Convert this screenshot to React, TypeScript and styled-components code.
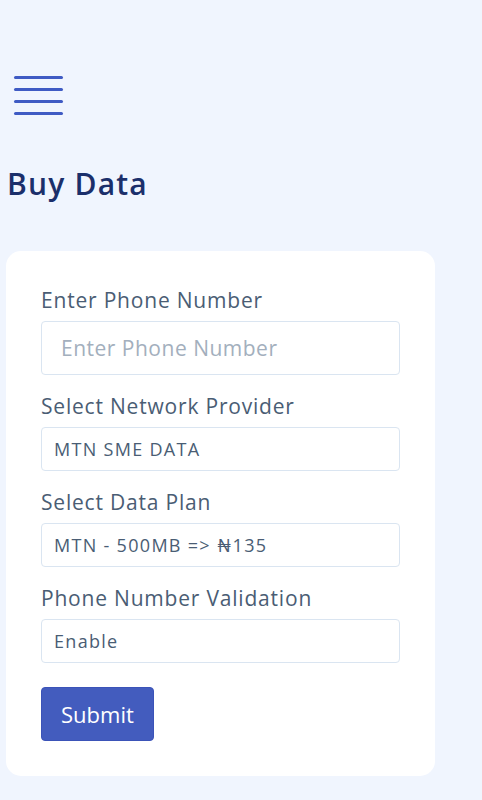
import React from "react";
import styled, { createGlobalStyle } from "styled-components";

const Global = createGlobalStyle`
  html, body {
    margin: 0;
    padding: 0;
    background: #f0f5fe;
  }
  body {
    font-family: "Open Sans", "Lato", sans-serif;
  }
  * { box-sizing: border-box; }
`;

const Page = styled.div`
  display: flow-root;
  min-height: 800px;
  padding: 0 47px 0 6px;
  background: #f0f5fe;
`;

const MenuButton = styled.button`
  display: flex;
  flex-direction: column;
  gap: 9px;
  width: 49px;
  margin: 76px 0 0 8px;
  padding: 0;
  border: none;
  background: transparent;
  cursor: pointer;
`;

const MenuLine = styled.span`
  display: block;
  width: 49px;
  height: 3px;
  border-radius: 2px;
  background: #3f5bc4;
`;

const Title = styled.h1`
  margin: 51px 0 0 1px;
  font-size: 30px;
  line-height: 36px;
  letter-spacing: 1.2px;
  font-weight: 600;
  color: #1b2f6b;
`;

const Card = styled.form`
  margin-top: 49px;
  background: #ffffff;
  border-radius: 15px;
  padding: 34px 35px 35px;
  display: flex;
  flex-direction: column;
  gap: 16px;
`;

const Field = styled.div`
  display: flex;
  flex-direction: column;
  gap: 6px;
`;

const Label = styled.label`
  font-size: 21px;
  line-height: 30px;
  letter-spacing: 0.8px;
  color: #4a5d74;
`;

const TextInput = styled.input`
  height: 54px;
  width: 100%;
  padding: 0 19px;
  border: 1px solid #dae5f1;
  border-radius: 4px;
  font-family: inherit;
  font-size: 21px;
  letter-spacing: 0.5px;
  color: #4a5d74;
  background: #fff;
  outline: none;
  &::placeholder {
    color: #a3afbd;
  }
`;

const Select = styled.select`
  appearance: none;
  -webkit-appearance: none;
  height: 44px;
  width: 100%;
  padding: 0 12px;
  border: 1px solid #dae5f1;
  border-radius: 4px;
  font-family: inherit;
  font-size: 18px;
  letter-spacing: 1.3px;
  color: #4a5d74;
  background: #fff;
  outline: none;
`;

const SubmitButton = styled.button`
  align-self: flex-start;
  margin-top: 8px;
  height: 54px;
  padding: 0 19px;
  border: 1px solid #3b53b8;
  border-radius: 4px;
  background: #435cbe;
  color: #ffffff;
  font-family: inherit;
  font-size: 22px;
  cursor: pointer;
`;

export default function App() {
  return (
    <>
      <Global />
      <Page>
        <MenuButton type="button" aria-label="Menu">
          <MenuLine />
          <MenuLine />
          <MenuLine />
          <MenuLine />
        </MenuButton>
        <Title>Buy Data</Title>
        <Card onSubmit={(e) => e.preventDefault()}>
          <Field>
            <Label htmlFor="phone">Enter Phone Number</Label>
            <TextInput id="phone" placeholder="Enter Phone Number" />
          </Field>
          <Field>
            <Label htmlFor="network">Select Network Provider</Label>
            <Select id="network" defaultValue="mtn">
              <option value="mtn">MTN SME DATA</option>
            </Select>
          </Field>
          <Field>
            <Label htmlFor="plan">Select Data Plan</Label>
            <Select id="plan" defaultValue="500">
              <option value="500">MTN - 500MB =&gt; ₦135</option>
            </Select>
          </Field>
          <Field>
            <Label htmlFor="validation">Phone Number Validation</Label>
            <Select id="validation" defaultValue="enable">
              <option value="enable">Enable</option>
            </Select>
          </Field>
          <SubmitButton type="submit">Submit</SubmitButton>
        </Card>
      </Page>
    </>
  );
}
